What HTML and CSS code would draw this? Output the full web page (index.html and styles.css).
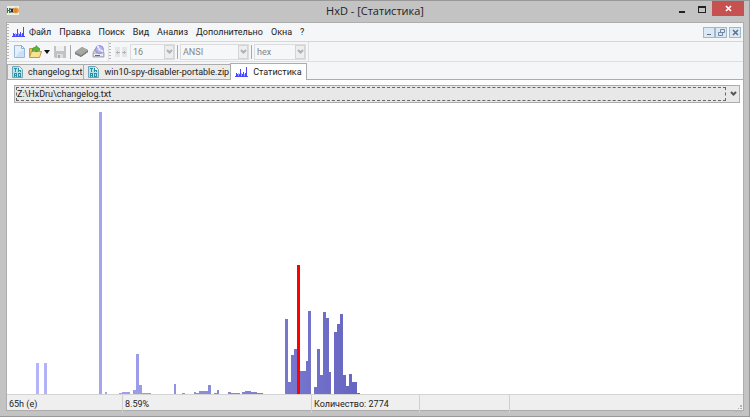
FILE: index.html
```
<!DOCTYPE html>
<html lang="ru">
<head>
    <meta charset="UTF-8">
    <meta name="viewport" content="width=device-width, initial-scale=1.0">
    <title>HxD - [Статистика]</title>
    <link rel="stylesheet" href="styles.css">
</head>
<body>
    <svg class="defs" width="0" height="0" aria-hidden="true">
        <symbol id="stats" viewBox="0 0 13 12">
            <path fill="#4848ff" d="M0 10h13v1H0zM1 7h1v3H1zM2 8h1v2H2zM5 3h1v7H5zM4 8h1v2H4zM8 6h1v4H8zM7 8h1v2H7zM11 1h1v9h-1zM10 7h1v3h-1z"/>
            <path fill="#a8a8ff" d="M3 7h1v3H3zM6 7h1v3H6zM9 8h1v2H9z"/>
        </symbol>
        <symbol id="file" viewBox="0 0 11 12">
            <path fill="#b5e2ea" stroke="#6fa6b8" d="M.5 .5h7l3 3v8H.5z"/>
            <path fill="#fff" d="M7 1v3h3z"/>
            <path fill="#2a8ea2" d="M2 2h3v1H4v3H3V3H2zM6 2h1v4H6zM7 4h2v2H8V5H7zM2 7h3v4H4v-1H3v1H2zM3 8v1h1V8zM6 7h3v4H6zM7 8v2h1V8z" fill-rule="evenodd"/>
        </symbol>
        <symbol id="chevron" viewBox="0 0 7 6">
            <path fill="none" stroke="currentColor" stroke-width="2" d="M1 1l2.500 2.500L6 1"/>
        </symbol>
    </svg>

    <div class="window">
        <header class="titlebar">
            <svg class="logo" width="12" height="9" viewBox="0 0 12 9">
                <path fill="#e9f2e4" d="M0 0h12v9H0z"/>
                <path fill="#2d7d46" d="M0 2h1v2h1V2h1v5H2V5H1v2H0z"/>
                <path stroke="#222" stroke-width="1.300" d="M3.500 2.500l3 4m0-4l-3 4"/>
                <circle cx="9" cy="4.500" r="3" fill="#f0a04c"/>
                <path fill="none" stroke="#c8641c" stroke-width=".7" d="M8 3v3h1q2-1.500 0-3z"/>
            </svg>
            <h1>HxD - [Статистика]</h1>
            <div class="window-buttons">
                <button type="button" aria-label="Свернуть"><svg width="8" height="9" viewBox="0 0 8 9"><path fill="#222" d="M1 7h6v2H1z"/></svg></button>
                <button type="button" aria-label="Развернуть"><svg width="8" height="9" viewBox="0 0 8 9"><path fill="#222" fill-rule="evenodd" d="M0 2h8v7H0zM1 4v4h6V4z"/></svg></button>
                <button type="button" class="close" aria-label="Закрыть"><svg width="7" height="7" viewBox="0 0 7 7"><path stroke="#fff" stroke-width="1.700" d="M1 1l5 5m0-5L1 6"/></svg></button>
            </div>
        </header>

        <div class="client">
            <nav class="menubar">
                <span class="grip"></span>
                <svg class="menu-icon" width="13" height="12"><use href="#stats"/></svg>
                <button type="button">Файл</button>
                <button type="button">Правка</button>
                <button type="button">Поиск</button>
                <button type="button">Вид</button>
                <button type="button">Анализ</button>
                <button type="button">Дополнительно</button>
                <button type="button">Окна</button>
                <button type="button">?</button>
                <div class="mdi-buttons">
                    <button type="button" aria-label="Свернуть окно"><svg width="7" height="7" viewBox="0 0 7 7"><path fill="#587088" d="M1 5h4v1H1z"/></svg></button>
                    <button type="button" aria-label="Восстановить окно"><svg width="7" height="7" viewBox="0 0 7 7"><path fill="#dce9f4" stroke="#7088a0" d="M2.500 .5h4v3h-4zM.5 3.500h4v3h-4z"/></svg></button>
                    <button type="button" aria-label="Закрыть окно"><svg width="7" height="7" viewBox="0 0 7 7"><path stroke="#587088" stroke-width="1.500" d="M1 1l5 5m0-5L1 6"/></svg></button>
                </div>
            </nav>

            <div class="toolbars">
                <div class="toolbar">
                    <span class="grip"></span>
                    <button type="button" class="tool" aria-label="Создать">
                        <svg width="11" height="13" viewBox="0 0 11 13">
                            <path fill="#e4f1fc" stroke="#9bb8d8" d="M.5 .5h7l3 3v9H.5z"/>
                            <path fill="#c8e0f6" d="M5 7l5-2v7H2z"/>
                            <path fill="#fff" stroke="#8caed2" d="M7.500 .5v3h3z"/>
                        </svg>
                    </button>
                    <button type="button" class="tool open" aria-label="Открыть">
                        <svg width="13" height="13" viewBox="0 0 13 13">
                            <path fill="#e8c45c" stroke="#c69a3c" d="M.5 11.500v-8h4l1 1h5v7z"/>
                            <path fill="#f8e294" stroke="#c69a3c" d="M.5 12.500l2-6h10l-2 6z"/>
                            <path fill="#58b83c" stroke="#328c28" stroke-width=".6" d="M3 6q0-4 4-4V.5L11 4 7 7V5Q4.500 5 3 6z"/>
                        </svg>
                        <svg width="6" height="4" viewBox="0 0 6 4"><path fill="#111" d="M0 0h6L3 4z"/></svg>
                    </button>
                    <button type="button" class="tool" aria-label="Сохранить" disabled>
                        <svg width="12" height="12" viewBox="0 0 12 12">
                            <path fill="#c2c2c2" d="M0 0h12v12H1l-1-1z"/>
                            <path fill="#f0f0f0" d="M2 0h8v5H2z"/>
                            <path fill="#dedede" d="M3 8h6v4H3z"/>
                            <path fill="#a8a8a8" d="M4 9h2v3H4z"/>
                        </svg>
                    </button>
                    <span class="separator"></span>
                    <button type="button" class="tool" aria-label="Открыть ОЗУ">
                        <svg width="13" height="11" viewBox="0 0 13 11">
                            <path fill="#8a8a86" d="M0 6l7-5 6 3v2l-7 5-6-3z"/>
                            <path fill="#a8a8a2" d="M0 6l7-5 6 3-7 5z"/>
                            <path fill="none" stroke="#666" stroke-dasharray="1 1" d="M0 7.500l6 3 7-5"/>
                        </svg>
                    </button>
                    <button type="button" class="tool" aria-label="Открыть диск">
                        <svg width="13" height="13" viewBox="0 0 13 13">
                            <path fill="#c6c6d6" stroke="#8c8ca4" stroke-width=".7" d="M1 8l2-4h7l2 4v4H1z"/>
                            <circle cx="7.500" cy="4.500" r="4" fill="#b6b4ee" stroke="#7a78c0" stroke-width=".7"/>
                            <path fill="#f4f4ff" d="M7.500 4.500l-3-3 2-1zM7.500 4.500l3 3 1-2z"/>
                            <circle cx="7.500" cy="4.500" r="1" fill="#fff"/>
                            <path fill="#ececf2" d="M2 9h9v2H2z"/>
                            <path fill="#6a6a86" d="M3 10h5v1H3z"/>
                        </svg>
                    </button>
                </div>
                <div class="toolbar fields">
                    <span class="grip"></span>
                    <svg class="width-icon" width="12" height="10" viewBox="0 0 12 10">
                        <path fill="#e6e6e6" d="M0 0h5v10H0zM7 0h5v10H7z"/>
                        <path fill="#b4b4b4" d="M1 5h4v1H1zM2 4h1v3H2zM7 5h4v1H7zM9 4h1v3H9z"/>
                    </svg>
                    <div class="combo bytes">
                        <select aria-label="Байт в строке" disabled><option>16</option></select>
                        <span class="arrow"><svg width="7" height="6"><use href="#chevron"/></svg></span>
                    </div>
                    <span class="separator"></span>
                    <div class="combo charset">
                        <select aria-label="Кодировка" disabled><option>ANSI</option></select>
                        <span class="arrow"><svg width="7" height="6"><use href="#chevron"/></svg></span>
                    </div>
                    <span class="separator"></span>
                    <div class="combo base">
                        <select aria-label="Система счисления" disabled><option>hex</option></select>
                        <span class="arrow"><svg width="7" height="6"><use href="#chevron"/></svg></span>
                    </div>
                </div>
            </div>

            <div class="tabs" role="tablist">
                <button type="button" class="tab" role="tab"><svg width="11" height="12"><use href="#file"/></svg>changelog.txt</button>
                <button type="button" class="tab" role="tab"><svg width="11" height="12"><use href="#file"/></svg>win10-spy-disabler-portable.zip</button>
                <button type="button" class="tab active" role="tab" aria-selected="true"><svg width="13" height="12"><use href="#stats"/></svg>Статистика</button>
            </div>

            <main class="content">
                <div class="combo source">
                    <select aria-label="Файл"><option>Z:\HxDru\changelog.txt</option></select>
                    <span class="arrow"><svg width="7" height="6"><use href="#chevron"/></svg></span>
                </div>
                <svg class="chart" id="chart" viewBox="0 0 256 288" preserveAspectRatio="none" role="img" aria-label="Частота байтов"></svg>
            </main>

            <footer class="statusbar">
                <span>65h (e)</span>
                <span>8.59%</span>
                <span>Количество: 2774</span>
                <span></span>
                <span></span>
                <svg class="size-grip" width="7" height="7" viewBox="0 0 7 7"><path fill="#b4b4b4" d="M5 0h2v2H5zM3 3h1v1H3zM5 3h2v1H5zM0 5h2v2H0zM3 5h1v2H3zM5 5h2v2H5z"/></svg>
            </footer>
        </div>
    </div>

    <script src="chart.js"></script>
</body>
</html>
```
FILE: styles.css
```
* {
    box-sizing: border-box;
}
body {
    margin: 0;
    font-family: Roboto, "Open Sans", sans-serif;
    font-size: 9px;
    color: #222;
}
button, select {
    font: inherit;
    color: inherit;
    margin: 0;
    padding: 0;
    border: none;
    background: none;
}
svg {
    display: block;
    flex: none;
}
.defs {
    position: absolute;
}
.window {
    display: flex;
    flex-direction: column;
    height: 100vh;
    min-height: 240px;
    padding: 0 5px 5px 6px;
    background-color: #c3c3c3;
    border: 1px solid #989898;
    border-left-width: 0;
}

/* title bar */
.titlebar {
    display: grid;
    grid-template-columns: 1fr auto 1fr;
    height: 21px;
}
.logo {
    margin: 5px 0 0 1px;
}
h1 {
    margin: 0;
    font-family: "Open Sans", sans-serif;
    font-size: 11px;
    line-height: 20px;
    font-weight: normal;
}
.window-buttons {
    display: flex;
    justify-content: flex-end;
    height: 15px;
}
.window-buttons button {
    display: flex;
    justify-content: center;
    align-items: center;
    width: 20px;
}
.window-buttons .close {
    width: 32px;
    background-color: #c75050;
}

.client {
    flex: 1;
    min-height: 0;
    display: flex;
    flex-direction: column;
    background-color: #f4f6f8;
    border: 1px solid #adadad;
}

/* menu and toolbars */
.grip {
    width: 2px;
    align-self: stretch;
    margin: 1px 0;
    background: repeating-linear-gradient(#b4b4b4 0 1px, transparent 1px 3px);
}
.menubar {
    display: flex;
    align-items: center;
    gap: 8px;
    height: 19px;
    border-bottom: 1px solid #d4d6d8;
}
.menu-icon {
    margin: 0 -4px 0 -5px;
}
.mdi-buttons {
    display: flex;
    margin-left: auto;
    padding-right: 2px;
}
.mdi-buttons button {
    display: flex;
    justify-content: center;
    align-items: center;
    width: 12px;
    height: 11px;
    border: 1px solid #a0b8cc;
    background-color: #dce9f4;
}
.mdi-buttons button:last-child {
    margin-left: 2px;
}
.toolbars {
    display: flex;
    height: 20px;
    border-bottom: 1px solid #dcdee0;
}
.toolbar {
    display: flex;
    align-items: center;
    gap: 4px;
    padding-right: 3px;
    border-right: 1px solid #dcdee0;
}
.toolbar .grip {
    margin-right: 1px;
}
.tool {
    display: flex;
    align-items: center;
    gap: 2px;
}
.separator {
    width: 1px;
    height: 14px;
    background-color: #a8a8a8;
}
.toolbar.fields {
    gap: 2px;
    padding-right: 2px;
}
.width-icon {
    margin: 0 1px;
}
.combo {
    display: grid;
    border: 1px solid #dcdcdc;
    background-color: #f6f7f8;
    color: #858585;
}
.combo select {
    grid-area: 1 / 1;
    appearance: none;
    width: 100%;
    height: 14px;
    padding-left: 2px;
    line-height: 12px;
    opacity: 1;
    color: inherit;
}
.combo .arrow {
    grid-area: 1 / 1;
    justify-self: end;
    display: flex;
    justify-content: center;
    align-items: center;
    width: 10px;
    pointer-events: none;
    border: 1px solid #d4d4d4;
    background-color: #eee;
    color: #b0b0b0;
}
.bytes {
    width: 45px;
}
.charset {
    width: 69px;
}
.base {
    width: 52px;
}

/* tabs */
.tabs {
    display: flex;
    align-items: flex-end;
    height: 18px;
    border-bottom: 1px solid #acacac;
}
.tab {
    display: flex;
    align-items: center;
    gap: 5px;
    height: 15px;
    padding: 0 1px 0 4px;
    border: 1px solid #acacac;
    border-width: 1px 0 0 1px;
    background-color: #ebebeb;
}
.tab.active {
    height: 17px;
    margin-bottom: -1px;
    padding: 0 4px;
    border-right-width: 1px;
    background-color: #fff;
}

/* statistics */
.content {
    flex: 1;
    min-height: 0;
    display: flex;
    flex-direction: column;
    padding: 5px 1px 0 0;
    background-color: #fff;
}
.source {
    margin: 0 2px 0 7px;
    padding: 1px;
    border-color: #acacac;
    background-color: #e8e8e8;
    color: #222;
}
.source select {
    width: calc(100% - 12px);
    border: 1px dashed #666;
    padding-left: 0;
}
.source .arrow {
    border: none;
    background: none;
    color: #555;
}
.chart {
    flex: 1;
    width: 100%;
    min-height: 0;
    margin-top: 4px;
}

/* status bar */
.statusbar {
    flex: none;
    display: grid;
    grid-template-columns: 116px 189px 108px 90px 1fr auto;
    height: 16px;
    line-height: 18px;
    border-top: 1px solid #d4d4d4;
    background-color: #efefef;
}
.statusbar span {
    padding-left: 2px;
    border-right: 1px solid #d0d0d0;
}
.statusbar span:nth-child(5) {
    border: none;
}
.size-grip {
    align-self: end;
    margin: 0 1px 1px 0;
}
```
FILE: chart.js
```
// byte value -> bar height
const counts = {
    10: 31, 13: 31, 32: 283, 34: 2,
    39: 1, 40: 2, 41: 2, 42: 2, 44: 4, 45: 40, 46: 9, 47: 1, 48: 1, 49: 1,
    58: 10, 61: 1, 65: 2, 66: 1, 67: 3, 68: 3, 69: 3, 70: 9, 72: 1, 73: 4,
    77: 2, 78: 1, 79: 1, 80: 1, 82: 2, 83: 3, 84: 3, 85: 2, 86: 2, 87: 1, 88: 1,
    97: 75, 98: 12, 99: 39, 100: 45, 101: 129, 102: 23, 103: 23, 104: 33, 105: 83,
    107: 7, 108: 45, 109: 19, 110: 82, 111: 76, 112: 22,
    114: 62, 115: 70, 116: 80, 117: 19, 118: 8, 119: 20, 120: 12, 121: 12, 122: 1
};
const selected = 101;
const chart = document.getElementById('chart');

for (const [key, height] of Object.entries(counts)) {
    const byte = Number(key);
    const bar = document.createElementNS('http://www.w3.org/2000/svg', 'rect');
    const shade = Math.round(187 - byte * 0.7);
    bar.setAttribute('x', byte);
    bar.setAttribute('y', 288 - height);
    bar.setAttribute('width', 1);
    bar.setAttribute('height', height);
    bar.setAttribute('shape-rendering', 'crispEdges');
    bar.setAttribute('fill', byte === selected ? '#f00' : `rgb(${shade}, ${shade}, ${Math.round(255 - byte / 2)})`);
    chart.appendChild(bar);
}
```
